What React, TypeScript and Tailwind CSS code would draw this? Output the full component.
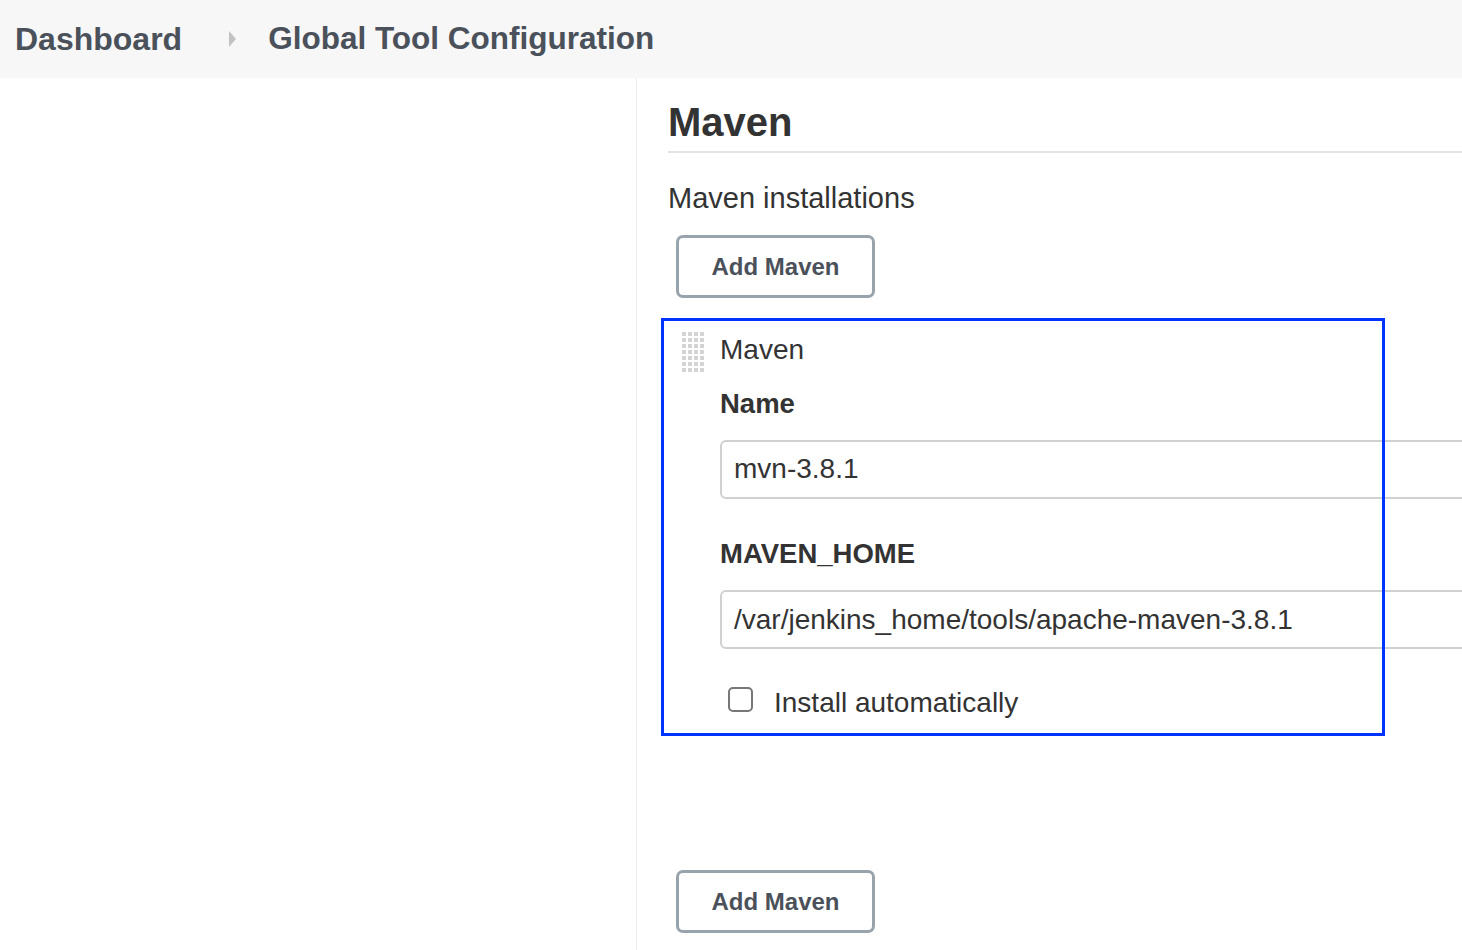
import React from "react";

const font = { fontFamily: '"Liberation Sans", Arial, sans-serif' };

function DragHandle() {
    const dots = [];
    for (let r = 0; r < 7; r++) {
        for (let c = 0; c < 4; c++) {
            dots.push(<rect key={`${r}-${c}`} x={c * 6} y={r * 6} width="4" height="4" fill="#d4d4d4" />);
        }
    }
    return (
        <svg width="24" height="42" viewBox="0 0 24 42">
            {dots}
        </svg>
    );
}

function AddButton() {
    return (
        <button className="w-[199px] h-[63px] rounded-[7px] border-[3px] border-[#98a3ab] bg-white text-[24px] font-bold text-[#4b515a] leading-none">
            Add Maven
        </button>
    );
}

export default function App() {
    return (
        <div className="h-[950px] w-[1462px] overflow-hidden bg-white text-[#333]" style={font}>
            {/* Breadcrumb bar */}
            <header className="h-[78px] bg-[#f7f7f7] flex items-center pl-[15px] text-[#4a515b] font-bold text-[32px]">
                <span>Dashboard</span>
                <svg className="ml-[47px] mr-[31px]" width="8" height="16" viewBox="0 0 8 16">
                    <path d="M0 0 L7 8 L0 16 Z" fill="#c2c2c2" />
                </svg>
                <span className="text-[31.5px]">Global Tool Configuration</span>
            </header>

            <div className="flex h-[872px]">
                <aside className="w-[637px] shrink-0 border-r border-[#e9edf0]" />

                <main className="flex-1 min-w-0 overflow-hidden pl-[31px]">
                    <h2 className="mt-[24px] pb-[9px] border-b-2 border-[#e3e3e3] text-[40px] font-bold leading-none text-[#333]">
                        Maven
                    </h2>

                    <p className="mt-[31px] text-[29px] leading-none">Maven installations</p>

                    <div className="mt-[22px] ml-[8px]">
                        <AddButton />
                    </div>

                    {/* Maven installation entry */}
                    <div className="relative mt-[20px] h-[418px] flex">
                        <div className="w-[52px] shrink-0 pl-[14px] pt-[14px]">
                            <DragHandle />
                        </div>
                        <div className="flex-1 pt-[18px]">
                            <p className="text-[28px] leading-none">Maven</p>
                            <p className="mt-[26px] text-[27.5px] leading-none font-semibold">Name</p>
                            <input
                                readOnly
                                defaultValue="mvn-3.8.1"
                                className="mt-[22px] block w-[900px] h-[59px] rounded-[6px] border-2 border-[#d0d0d0] px-[12px] text-[28px] text-[#333] outline-none"
                                style={font}
                            />
                            <p className="mt-[41px] text-[27.5px] leading-none font-semibold">MAVEN_HOME</p>
                            <input
                                readOnly
                                defaultValue="/var/jenkins_home/tools/apache-maven-3.8.1"
                                className="mt-[23px] block w-[900px] h-[59px] rounded-[6px] border-2 border-[#d0d0d0] px-[12px] text-[28px] text-[#333] outline-none"
                                style={font}
                            />
                            <div className="mt-[38px] flex items-start pl-[8px]">
                                <span className="w-[25px] h-[25px] rounded-[5px] border-2 border-[#777] bg-white shrink-0" />
                                <span className="ml-[21px] mt-[2px] text-[28px] leading-none">Install automatically</span>
                            </div>
                        </div>
                        {/* highlight annotation */}
                        <div className="pointer-events-none absolute left-[-7px] top-0 w-[724px] h-[418px] border-[3px] border-[#0033ff]" />
                    </div>

                    <div className="mt-[134px] ml-[8px]">
                        <AddButton />
                    </div>
                </main>
            </div>
        </div>
    );
}
